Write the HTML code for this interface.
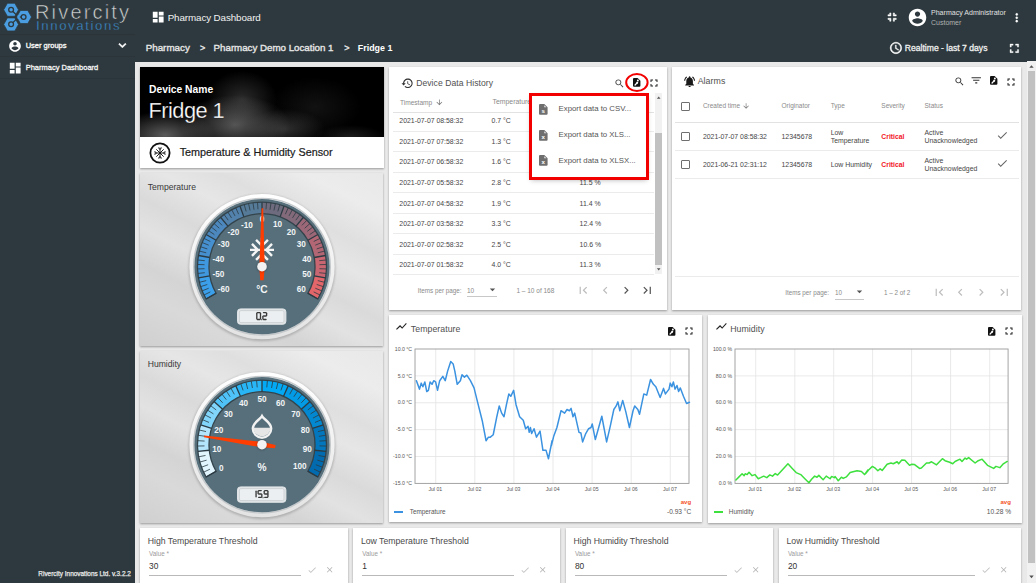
<!DOCTYPE html>
<html><head><meta charset="utf-8"><title>Pharmacy Dashboard</title>
<style>
*{box-sizing:border-box;margin:0;padding:0}
html,body{width:1036px;height:583px;overflow:hidden}
body{position:relative;background:#e9e9e9;font-family:"Liberation Sans",sans-serif}
.a{position:absolute;white-space:nowrap}
svg.a{overflow:visible}
.card{position:absolute;background:#fff;box-shadow:0 1px 2px rgba(0,0,0,.35)}
</style></head><body>
<div class="a" style="left:0px;top:0px;width:1036px;height:61.7px;background:#2d393e"></div>
<div class="a" style="left:0px;top:61px;width:135px;height:522px;background:#2d393e"></div>
<div class="a" style="left:0px;top:34px;width:135px;height:1px;background:#2a3439"></div>
<div class="a" style="left:0px;top:56px;width:135px;height:1px;background:#2a3439"></div>
<div class="a" style="left:0px;top:78px;width:135px;height:1px;background:#2a3439"></div>
<svg class="a" style="left:0;top:0" width="135" height="34" viewBox="0 0 135 34">
<g fill="#4a9de0" stroke="#2d393e" stroke-width="0.7" stroke-linejoin="round">
<polygon points="3.7,9.8 7.4,3.3 14.8,3.3 18.5,9.8 14.8,16.3 7.4,16.3"/>
<polygon points="16.7,17 20.4,10.5 27.8,10.5 31.5,17 27.8,23.5 20.4,23.5"/>
<polygon points="3.7,24.4 7.4,17.9 14.8,17.9 18.5,24.4 14.8,30.9 7.4,30.9"/>
</g>
<g fill="none" stroke="#2d393e" stroke-width="1.3" stroke-linecap="butt">
<circle cx="11.1" cy="9.8" r="2.4"/><circle cx="23.6" cy="17" r="2.4"/><circle cx="11.1" cy="24.3" r="2.4"/>
<path d="M12.9 11.5 L17.2 15.6 M21.2 17 H19.4 M12.9 22.6 L17.2 18.4"/>
</g>
<polygon points="17.6,15.0 20.6,17 17.6,19.0" fill="#4a9de0"/>
<text x="35" y="18.75" font-family="Liberation Sans" font-size="20" fill="#d4d4d4" stroke="#2d393e" stroke-width="0.55" letter-spacing="1.9" textLength="96">Rivercity</text>
<text x="36" y="30.4" font-family="Liberation Sans" font-size="13.2" fill="#3d8ed0" stroke="#2d393e" stroke-width="0.3" letter-spacing="1.5" textLength="85">Innovations</text>
</svg>
<svg class="a" style="left:7.9px;top:38.6px;" width="14" height="14" viewBox="0 0 24 24"><path fill="#fff" d="M12 2C6.48 2 2 6.48 2 12s4.48 10 10 10 10-4.48 10-10S17.52 2 12 2zm0 3c1.66 0 3 1.34 3 3s-1.34 3-3 3-3-1.34-3-3 1.34-3 3-3zm0 14.2c-2.5 0-4.71-1.28-6-3.22.03-1.99 4-3.08 6-3.08 1.99 0 5.970 1.09 6 3.08-1.29 1.94-3.5 3.22-6 3.22z"/></svg>
<div class="a" style="left:25.70px;top:42.25px;font-size:7.5px;line-height:7.5px;color:#f4f4f4;-webkit-text-stroke:0.35px #f4f4f4;">User groups</div>
<svg class="a" style="left:114.9px;top:38px;" width="14.8" height="14.8" viewBox="0 0 24 24"><path fill="#fff" stroke="#fff" stroke-width="0.9" d="M16.59 8.59L12 13.17 7.41 8.59 6 10l6 6 6-6z"/></svg>
<svg class="a" style="left:8px;top:61.1px;" width="14.4" height="14.4" viewBox="0 0 24 24"><path fill="#fff" d="M3 13h8V3H3v10zm0 8h8v-6H3v6zm10 0h8V11h-8v10zm0-18v6h8V3h-8z"/></svg>
<div class="a" style="left:25.70px;top:63.95px;font-size:7.5px;line-height:7.5px;color:#f4f4f4;-webkit-text-stroke:0.3px #f4f4f4;">Pharmacy Dashboard</div>
<div class="a" style="left:38.30px;top:570.64px;font-size:6.45px;line-height:6.45px;color:#e8e8e8;-webkit-text-stroke:0.25px #e8e8e8;">Rivercity Innovations Ltd. v.3.2.2</div>
<svg class="a" style="left:151.4px;top:10.1px;" width="14.4" height="14.4" viewBox="0 0 24 24"><path fill="#fff" d="M3 13h8V3H3v10zm0 8h8v-6H3v6zm10 0h8V11h-8v10zm0-18v6h8V3h-8z"/></svg>
<div class="a" style="left:167.70px;top:13.10px;font-size:9.8px;line-height:9.8px;color:#f2f2f2;letter-spacing:-0.1px;">Pharmacy Dashboard</div>
<div class="a" style="left:145.70px;top:43.10px;font-size:9.8px;line-height:9.8px;color:#e6e6e6;-webkit-text-stroke:0.35px #e6e6e6;">Pharmacy</div>
<div class="a" style="left:200.00px;top:43.78px;font-size:9px;line-height:9px;color:#e6e6e6;-webkit-text-stroke:0.35px #e6e6e6;">&gt;</div>
<div class="a" style="left:213.60px;top:43.15px;font-size:9.75px;line-height:9.75px;color:#e6e6e6;letter-spacing:-0.02px;-webkit-text-stroke:0.35px #e6e6e6;">Pharmacy Demo Location 1</div>
<div class="a" style="left:344.30px;top:43.78px;font-size:9px;line-height:9px;color:#e6e6e6;-webkit-text-stroke:0.35px #e6e6e6;">&gt;</div>
<div class="a" style="left:357.80px;top:43.87px;font-size:8.9px;line-height:8.9px;color:#fff;font-weight:700;">Fridge 1</div>
<svg class="a" style="left:885.2px;top:10.2px;" width="14.2" height="14.2" viewBox="0 0 24 24"><path fill="#fff" stroke="#fff" stroke-width="0.9" d="M5 16h3v3h2v-5H5v2zm3-8H5v2h5V5H8v3zm6 11h2v-3h3v-2h-5v5zm2-11V5h-2v5h5V8h-3z"/></svg>
<svg class="a" style="left:906.55px;top:6.95px;" width="21" height="21" viewBox="0 0 24 24"><path fill="#fff" d="M12 2C6.48 2 2 6.48 2 12s4.48 10 10 10 10-4.48 10-10S17.52 2 12 2zm0 3c1.66 0 3 1.34 3 3s-1.34 3-3 3-3-1.34-3-3 1.34-3 3-3zm0 14.2c-2.5 0-4.71-1.28-6-3.22.03-1.99 4-3.08 6-3.08 1.99 0 5.970 1.09 6 3.08-1.29 1.94-3.5 3.22-6 3.22z"/></svg>
<div class="a" style="left:931.00px;top:9.03px;font-size:7.05px;line-height:7.05px;color:#e0e0e0;">Pharmacy Administrator</div>
<div class="a" style="left:931.00px;top:18.87px;font-size:7px;line-height:7px;color:#b0b0b0;">Customer</div>
<svg class="a" style="left:1010.0px;top:10.55px;" width="13.5" height="13.5" viewBox="0 0 24 24"><path fill="#fff" stroke="#fff" stroke-width="0.5" d="M12 8c1.1 0 2-.9 2-2s-.9-2-2-2-2 .9-2 2 .9 2 2 2zm0 2c-1.1 0-2 .9-2 2s.9 2 2 2 2-.9 2-2-.9-2-2-2zm0 6c-1.1 0-2 .9-2 2s.9 2 2 2 2-.9 2-2-.9-2-2-2z"/></svg>
<svg class="a" style="left:888.84px;top:41.44px;" width="13.9" height="13.9" viewBox="0 0 24 24"><path fill="#fff" stroke="#fff" stroke-width="0.7" d="M11.99 2C6.47 2 2 6.48 2 12s4.47 10 9.99 10C17.52 22 22 17.52 22 12S17.52 2 11.99 2zM12 20c-4.420 0-8-3.58-8-8s3.58-8 8-8 8 3.58 8 8-3.58 8-8 8zm.5-13H11v6l5.25 3.15.75-1.23-4.5-2.67z"/></svg>
<div class="a" style="left:904.80px;top:44.22px;font-size:8.6px;line-height:8.6px;color:#f0f0f0;-webkit-text-stroke:0.3px #f0f0f0;">Realtime - last 7 days</div>
<svg class="a" style="left:1007.2px;top:40.94px;" width="14.7" height="14.7" viewBox="0 0 24 24"><path fill="#fff" stroke="#fff" stroke-width="0.6" d="M7 14H5v5h5v-2H7v-3zm-2-4h2V7h3V5H5v5zm12 7h-3v2h5v-5h-2v3zM14 5v2h3v3h2V5h-5z"/></svg>
<div class="card" style="left:140px;top:67px;width:243.5px;height:101px;">
<div class="a" style="left:0;top:0;width:243.5px;height:70px;background:
  radial-gradient(ellipse 50px 24px at 25px 68px, rgba(150,150,150,.6), rgba(150,150,150,0) 100%),
  radial-gradient(ellipse 55px 30px at 95px 58px, rgba(140,140,140,.6), rgba(140,140,140,0) 100%),
  radial-gradient(ellipse 35px 28px at 102px 32px, rgba(120,120,120,.35), rgba(110,110,110,0) 100%),
  radial-gradient(ellipse 40px 20px at 145px 62px, rgba(120,120,120,.38), rgba(110,110,110,0) 100%),
  radial-gradient(ellipse 45px 30px at 175px 40px, rgba(70,70,70,.25), rgba(60,60,60,0) 100%),
  radial-gradient(ellipse 35px 12px at 210px 70px, rgba(110,110,110,.25), rgba(100,100,100,0) 100%),
  #000;"></div>
</div>
<div class="a" style="left:149.00px;top:85.08px;font-size:10.3px;line-height:10.3px;color:#fff;font-weight:700;">Device Name</div>
<svg class="a" style="left:140px;top:95px" width="120" height="30" viewBox="140 95 120 30"><text x="148.6" y="117.7" font-family="Liberation Sans" font-size="21.8" letter-spacing="-0.55" fill="#ffffff" stroke="rgba(0,0,0,.5)" stroke-width="0.45">Fridge 1</text></svg>
<svg class="a" style="left:148.8px;top:141.7px" width="22" height="22" viewBox="0 0 22 22"><circle cx="11" cy="11" r="9.6" fill="none" stroke="#111" stroke-width="1.8"/><g stroke="#111" stroke-width="0.95" fill="none" stroke-linecap="round"><path d="M11 5.8V16.2M5.8 11H16.2M7.6 7.6L14.4 14.4M14.4 7.6L7.6 14.4"/><path d="M9.4 5.9L11 7.4L12.6 5.9M9.4 16.1L11 14.6L12.6 16.1M5.9 9.4L7.4 11L5.9 12.6M16.1 9.4L14.6 11L16.1 12.6"/></g></svg>
<div class="a" style="left:179.70px;top:147.46px;font-size:10.8px;line-height:10.8px;color:#1a1a1a;-webkit-text-stroke:0.2px #1a1a1a;">Temperature &amp; Humidity Sensor</div>
<div class="card" style="left:140px;top:173px;width:243px;height:173px;background:linear-gradient(27deg,#d0d0d0 0%,#d9d9d9 18%,#d4d4d4 28%,#e2e2e2 40%,#dadada 50%,#e6e6e6 62%,#dfdfdf 72%,#ececec 86%,#e8e8e8 100%);"></div>
<div class="a" style="left:147.70px;top:182.92px;font-size:8.6px;line-height:8.6px;color:#383838;">Temperature</div>
<svg class="a" style="left:140px;top:173px" width="243" height="173" viewBox="140 173 243 173"><defs>
<radialGradient id="bezt" cx="262.0" cy="266.7" r="73" gradientUnits="userSpaceOnUse">
<stop offset="0.88" stop-color="#b9bdbf"/><stop offset="0.93" stop-color="#e9e9e9"/><stop offset="0.97" stop-color="#fbfbfb"/><stop offset="1" stop-color="#d0d0d0"/></radialGradient>
<linearGradient id="bezlt" x1="0" y1="0" x2="0" y2="1"><stop offset="0" stop-color="#fff"/><stop offset="1" stop-color="#e3e3e3"/></linearGradient>
<filter id="sht" x="-20%" y="-20%" width="140%" height="140%"><feGaussianBlur stdDeviation="1.2"/></filter>
</defs><circle cx="262.0" cy="267.7" r="73.5" fill="rgba(0,0,0,.18)" filter="url(#sht)"/><circle cx="262.0" cy="266.7" r="72.6" fill="url(#bezlt)"/><circle cx="262.0" cy="266.7" r="68.3" fill="none" stroke="#c4c8ca" stroke-width="1.4"/><circle cx="262.0" cy="266.7" r="67.6" fill="#566f7b"/><path fill="#3c9fea" d="M206.14 298.95 A64.5 64.5 0 0 1 198.48 277.90 L209.81 275.90 A53 53 0 0 0 216.10 293.20Z"/><path fill="#4098de" d="M198.48 277.90 A64.5 64.5 0 0 1 198.48 255.50 L209.81 257.50 A53 53 0 0 0 209.81 275.90Z"/><path fill="#4690cf" d="M198.48 255.50 A64.5 64.5 0 0 1 206.14 234.45 L216.10 240.20 A53 53 0 0 0 209.81 257.50Z"/><path fill="#4c88bd" d="M206.14 234.45 A64.5 64.5 0 0 1 220.54 217.29 L227.93 226.10 A53 53 0 0 0 216.10 240.20Z"/><path fill="#5281ab" d="M220.54 217.29 A64.5 64.5 0 0 1 239.94 206.09 L243.87 216.90 A53 53 0 0 0 227.93 226.10Z"/><path fill="#567b98" d="M239.94 206.09 A64.5 64.5 0 0 1 262.00 202.20 L262.00 213.70 A53 53 0 0 0 243.87 216.90Z"/><path fill="#6d6b7d" d="M262.00 202.20 A64.5 64.5 0 0 1 284.06 206.09 L280.13 216.90 A53 53 0 0 0 262.00 213.70Z"/><path fill="#836a7b" d="M284.06 206.09 A64.5 64.5 0 0 1 303.46 217.29 L296.07 226.10 A53 53 0 0 0 280.13 216.90Z"/><path fill="#9c6878" d="M303.46 217.29 A64.5 64.5 0 0 1 317.86 234.45 L307.90 240.20 A53 53 0 0 0 296.07 226.10Z"/><path fill="#b36775" d="M317.86 234.45 A64.5 64.5 0 0 1 325.52 255.50 L314.19 257.50 A53 53 0 0 0 307.90 240.20Z"/><path fill="#ca6671" d="M325.52 255.50 A64.5 64.5 0 0 1 325.52 277.90 L314.19 275.90 A53 53 0 0 0 314.19 257.50Z"/><path fill="#e2666a" d="M325.52 277.90 A64.5 64.5 0 0 1 317.86 298.95 L307.90 293.20 A53 53 0 0 0 314.19 275.90Z"/><path fill="none" stroke="#34444c" stroke-width="1.3" d="M206.14 298.95 A64.5 64.5 0 1 1 317.86 298.95 L307.90 293.20 A53 53 0 1 0 216.10 293.20Z"/><line x1="216.10" y1="293.20" x2="206.14" y2="298.95" stroke="#2c3b43" stroke-width="1.3"/><line x1="210.32" y1="291.91" x2="204.03" y2="294.97" stroke="#2c3b43" stroke-width="0.8"/><line x1="208.69" y1="288.24" x2="202.20" y2="290.86" stroke="#2c3b43" stroke-width="0.8"/><line x1="207.31" y1="284.47" x2="200.66" y2="286.63" stroke="#2c3b43" stroke-width="0.8"/><line x1="206.21" y1="280.61" x2="199.42" y2="282.30" stroke="#2c3b43" stroke-width="0.8"/><line x1="209.81" y1="275.90" x2="198.48" y2="277.90" stroke="#2c3b43" stroke-width="1.3"/><line x1="204.81" y1="272.71" x2="197.85" y2="273.44" stroke="#2c3b43" stroke-width="0.8"/><line x1="204.54" y1="268.71" x2="197.54" y2="268.95" stroke="#2c3b43" stroke-width="0.8"/><line x1="204.54" y1="264.69" x2="197.54" y2="264.45" stroke="#2c3b43" stroke-width="0.8"/><line x1="204.81" y1="260.69" x2="197.85" y2="259.96" stroke="#2c3b43" stroke-width="0.8"/><line x1="209.81" y1="257.50" x2="198.48" y2="255.50" stroke="#2c3b43" stroke-width="1.3"/><line x1="206.21" y1="252.79" x2="199.42" y2="251.10" stroke="#2c3b43" stroke-width="0.8"/><line x1="207.31" y1="248.93" x2="200.66" y2="246.77" stroke="#2c3b43" stroke-width="0.8"/><line x1="208.69" y1="245.16" x2="202.20" y2="242.54" stroke="#2c3b43" stroke-width="0.8"/><line x1="210.32" y1="241.49" x2="204.03" y2="238.43" stroke="#2c3b43" stroke-width="0.8"/><line x1="216.10" y1="240.20" x2="206.14" y2="234.45" stroke="#2c3b43" stroke-width="1.3"/><line x1="214.33" y1="234.55" x2="208.53" y2="230.63" stroke="#2c3b43" stroke-width="0.8"/><line x1="216.69" y1="231.30" x2="211.17" y2="226.99" stroke="#2c3b43" stroke-width="0.8"/><line x1="219.27" y1="228.22" x2="214.07" y2="223.54" stroke="#2c3b43" stroke-width="0.8"/><line x1="222.06" y1="225.34" x2="217.19" y2="220.30" stroke="#2c3b43" stroke-width="0.8"/><line x1="227.93" y1="226.10" x2="220.54" y2="217.29" stroke="#2c3b43" stroke-width="1.3"/><line x1="228.20" y1="220.18" x2="224.09" y2="214.52" stroke="#2c3b43" stroke-width="0.8"/><line x1="231.53" y1="217.94" x2="227.82" y2="212.00" stroke="#2c3b43" stroke-width="0.8"/><line x1="235.01" y1="215.93" x2="231.72" y2="209.75" stroke="#2c3b43" stroke-width="0.8"/><line x1="238.61" y1="214.17" x2="235.77" y2="207.78" stroke="#2c3b43" stroke-width="0.8"/><line x1="243.87" y1="216.90" x2="239.94" y2="206.09" stroke="#2c3b43" stroke-width="1.3"/><line x1="246.15" y1="211.43" x2="244.22" y2="204.70" stroke="#2c3b43" stroke-width="0.8"/><line x1="250.05" y1="210.46" x2="248.59" y2="203.61" stroke="#2c3b43" stroke-width="0.8"/><line x1="254.00" y1="209.76" x2="253.02" y2="202.83" stroke="#2c3b43" stroke-width="0.8"/><line x1="257.99" y1="209.34" x2="257.50" y2="202.36" stroke="#2c3b43" stroke-width="0.8"/><line x1="262.00" y1="213.70" x2="262.00" y2="202.20" stroke="#2c3b43" stroke-width="1.3"/><line x1="266.01" y1="209.34" x2="266.50" y2="202.36" stroke="#2c3b43" stroke-width="0.8"/><line x1="270.00" y1="209.76" x2="270.98" y2="202.83" stroke="#2c3b43" stroke-width="0.8"/><line x1="273.95" y1="210.46" x2="275.41" y2="203.61" stroke="#2c3b43" stroke-width="0.8"/><line x1="277.85" y1="211.43" x2="279.78" y2="204.70" stroke="#2c3b43" stroke-width="0.8"/><line x1="280.13" y1="216.90" x2="284.06" y2="206.09" stroke="#2c3b43" stroke-width="1.3"/><line x1="285.39" y1="214.17" x2="288.23" y2="207.78" stroke="#2c3b43" stroke-width="0.8"/><line x1="288.99" y1="215.93" x2="292.28" y2="209.75" stroke="#2c3b43" stroke-width="0.8"/><line x1="292.47" y1="217.94" x2="296.18" y2="212.00" stroke="#2c3b43" stroke-width="0.8"/><line x1="295.80" y1="220.18" x2="299.91" y2="214.52" stroke="#2c3b43" stroke-width="0.8"/><line x1="296.07" y1="226.10" x2="303.46" y2="217.29" stroke="#2c3b43" stroke-width="1.3"/><line x1="301.94" y1="225.34" x2="306.81" y2="220.30" stroke="#2c3b43" stroke-width="0.8"/><line x1="304.73" y1="228.22" x2="309.93" y2="223.54" stroke="#2c3b43" stroke-width="0.8"/><line x1="307.31" y1="231.30" x2="312.83" y2="226.99" stroke="#2c3b43" stroke-width="0.8"/><line x1="309.67" y1="234.55" x2="315.47" y2="230.63" stroke="#2c3b43" stroke-width="0.8"/><line x1="307.90" y1="240.20" x2="317.86" y2="234.45" stroke="#2c3b43" stroke-width="1.3"/><line x1="313.68" y1="241.49" x2="319.97" y2="238.43" stroke="#2c3b43" stroke-width="0.8"/><line x1="315.31" y1="245.16" x2="321.80" y2="242.54" stroke="#2c3b43" stroke-width="0.8"/><line x1="316.69" y1="248.93" x2="323.34" y2="246.77" stroke="#2c3b43" stroke-width="0.8"/><line x1="317.79" y1="252.79" x2="324.58" y2="251.10" stroke="#2c3b43" stroke-width="0.8"/><line x1="314.19" y1="257.50" x2="325.52" y2="255.50" stroke="#2c3b43" stroke-width="1.3"/><line x1="319.19" y1="260.69" x2="326.15" y2="259.96" stroke="#2c3b43" stroke-width="0.8"/><line x1="319.46" y1="264.69" x2="326.46" y2="264.45" stroke="#2c3b43" stroke-width="0.8"/><line x1="319.46" y1="268.71" x2="326.46" y2="268.95" stroke="#2c3b43" stroke-width="0.8"/><line x1="319.19" y1="272.71" x2="326.15" y2="273.44" stroke="#2c3b43" stroke-width="0.8"/><line x1="314.19" y1="275.90" x2="325.52" y2="277.90" stroke="#2c3b43" stroke-width="1.3"/><line x1="317.79" y1="280.61" x2="324.58" y2="282.30" stroke="#2c3b43" stroke-width="0.8"/><line x1="316.69" y1="284.47" x2="323.34" y2="286.63" stroke="#2c3b43" stroke-width="0.8"/><line x1="315.31" y1="288.24" x2="321.80" y2="290.86" stroke="#2c3b43" stroke-width="0.8"/><line x1="313.68" y1="291.91" x2="319.97" y2="294.97" stroke="#2c3b43" stroke-width="0.8"/><line x1="307.90" y1="293.20" x2="317.86" y2="298.95" stroke="#2c3b43" stroke-width="1.3"/><text x="223.61" y="291.55" text-anchor="middle" font-family="Liberation Sans" font-size="8.2" font-weight="700" fill="#f2f4f5">-60</text><text x="218.34" y="277.08" text-anchor="middle" font-family="Liberation Sans" font-size="8.2" font-weight="700" fill="#f2f4f5">-50</text><text x="218.34" y="261.69" text-anchor="middle" font-family="Liberation Sans" font-size="8.2" font-weight="700" fill="#f2f4f5">-40</text><text x="223.61" y="247.22" text-anchor="middle" font-family="Liberation Sans" font-size="8.2" font-weight="700" fill="#f2f4f5">-30</text><text x="233.50" y="235.42" text-anchor="middle" font-family="Liberation Sans" font-size="8.2" font-weight="700" fill="#f2f4f5">-20</text><text x="246.84" y="227.72" text-anchor="middle" font-family="Liberation Sans" font-size="8.2" font-weight="700" fill="#f2f4f5">-10</text><text x="262.00" y="222.46" text-anchor="middle" font-family="Liberation Sans" font-size="8.2" font-weight="700" fill="#f2f4f5">0</text><text x="277.54" y="226.69" text-anchor="middle" font-family="Liberation Sans" font-size="8.2" font-weight="700" fill="#f2f4f5">10</text><text x="291.20" y="234.58" text-anchor="middle" font-family="Liberation Sans" font-size="8.2" font-weight="700" fill="#f2f4f5">20</text><text x="301.35" y="246.67" text-anchor="middle" font-family="Liberation Sans" font-size="8.2" font-weight="700" fill="#f2f4f5">30</text><text x="306.74" y="261.50" text-anchor="middle" font-family="Liberation Sans" font-size="8.2" font-weight="700" fill="#f2f4f5">40</text><text x="306.74" y="277.27" text-anchor="middle" font-family="Liberation Sans" font-size="8.2" font-weight="700" fill="#f2f4f5">50</text><text x="301.35" y="292.10" text-anchor="middle" font-family="Liberation Sans" font-size="8.2" font-weight="700" fill="#f2f4f5">60</text><g transform="translate(247.6 235.5) scale(1.2)"><path fill="#f5f5f5" d="M22 11h-4.17l3.24-3.24-1.41-1.42L15 11h-2V9l4.66-4.66-1.42-1.41L13 6.17V2h-2v4.17L7.76 2.93 6.34 4.34 11 9v2H9L4.34 6.34 2.93 7.76 6.17 11H2v2h4.17l-3.24 3.24 1.41 1.42L9 13h2v2l-4.66 4.660 1.42 1.41L11 17.83V22h2v-4.17l3.24 3.24 1.42-1.41L13 15v-2h2l4.66 4.66 1.41-1.42L17.83 13H22z"/></g><text x="262.0" y="293.0" text-anchor="middle" font-family="Liberation Sans" font-size="10.2" font-weight="700" fill="#f4f6f7">°C</text><rect x="237.5" y="308.9" width="48.4" height="15.4" rx="3" fill="#e4e7e9" stroke="#dfe3e5" stroke-width="1"/><rect x="239.4" y="310.59999999999997" width="44.6" height="12.0" rx="1.5" fill="#eceff1" stroke="#c3c8cb" stroke-width="0.7"/><path d="M257.40 312.55 L259.90 312.55" stroke="#3a3a3a" stroke-width="1.35" stroke-linecap="round"/><path d="M260.50 313.15 L260.50 315.60" stroke="#3a3a3a" stroke-width="1.35" stroke-linecap="round"/><path d="M260.50 316.40 L260.50 318.85" stroke="#3a3a3a" stroke-width="1.35" stroke-linecap="round"/><path d="M257.40 319.45 L259.90 319.45" stroke="#3a3a3a" stroke-width="1.35" stroke-linecap="round"/><path d="M256.80 316.40 L256.80 318.85" stroke="#3a3a3a" stroke-width="1.35" stroke-linecap="round"/><path d="M256.80 313.15 L256.80 315.60" stroke="#3a3a3a" stroke-width="1.35" stroke-linecap="round"/><rect x="261.25" y="319.05" width="0.9" height="1.2" fill="#3a3a3a"/><path d="M263.50 312.55 L266.00 312.55" stroke="#3a3a3a" stroke-width="1.35" stroke-linecap="round"/><path d="M266.60 313.15 L266.60 315.60" stroke="#3a3a3a" stroke-width="1.35" stroke-linecap="round"/><path d="M263.50 319.45 L266.00 319.45" stroke="#3a3a3a" stroke-width="1.35" stroke-linecap="round"/><path d="M262.90 316.40 L262.90 318.85" stroke="#3a3a3a" stroke-width="1.35" stroke-linecap="round"/><path d="M263.50 316.00 L266.00 316.00" stroke="#3a3a3a" stroke-width="1.35" stroke-linecap="round"/><g transform="rotate(0.40 262.0 266.7)"><polygon points="261.2,208.2 262.8,208.2 264.7,266.7 263.7,280.2 260.3,280.2 259.3,266.7" fill="#ff3d00"/></g><circle cx="262.0" cy="266.7" r="5.2" fill="rgba(0,0,0,.25)" filter="url(#sht)"/><circle cx="262.0" cy="266.7" r="4.8" fill="#f2f2f2"/></svg>
<div class="card" style="left:140px;top:350.6px;width:243px;height:172.6px;background:linear-gradient(27deg,#d0d0d0 0%,#d9d9d9 18%,#d4d4d4 28%,#e2e2e2 40%,#dadada 50%,#e6e6e6 62%,#dfdfdf 72%,#ececec 86%,#e8e8e8 100%);"></div>
<div class="a" style="left:147.70px;top:360.32px;font-size:8.6px;line-height:8.6px;color:#383838;">Humidity</div>
<svg class="a" style="left:140px;top:350.6px" width="243" height="173" viewBox="140 350.6 243 173"><defs>
<radialGradient id="bezh" cx="262.0" cy="444.3" r="73" gradientUnits="userSpaceOnUse">
<stop offset="0.88" stop-color="#b9bdbf"/><stop offset="0.93" stop-color="#e9e9e9"/><stop offset="0.97" stop-color="#fbfbfb"/><stop offset="1" stop-color="#d0d0d0"/></radialGradient>
<linearGradient id="bezlh" x1="0" y1="0" x2="0" y2="1"><stop offset="0" stop-color="#fff"/><stop offset="1" stop-color="#e3e3e3"/></linearGradient>
<filter id="shh" x="-20%" y="-20%" width="140%" height="140%"><feGaussianBlur stdDeviation="1.2"/></filter>
</defs><circle cx="262.0" cy="445.3" r="73.5" fill="rgba(0,0,0,.18)" filter="url(#shh)"/><circle cx="262.0" cy="444.3" r="72.6" fill="url(#bezlh)"/><circle cx="262.0" cy="444.3" r="68.3" fill="none" stroke="#c4c8ca" stroke-width="1.4"/><circle cx="262.0" cy="444.3" r="67.6" fill="#566f7b"/><path fill="#e1f5fe" d="M206.14 476.55 A64.5 64.5 0 0 1 197.85 451.04 L209.29 449.84 A53 53 0 0 0 216.10 470.80Z"/><path fill="#b3e5fc" d="M197.85 451.04 A64.5 64.5 0 0 1 200.66 424.37 L211.59 427.92 A53 53 0 0 0 209.29 449.84Z"/><path fill="#81d4fa" d="M200.66 424.37 A64.5 64.5 0 0 1 214.07 401.14 L222.61 408.84 A53 53 0 0 0 211.59 427.92Z"/><path fill="#4fc3f7" d="M214.07 401.14 A64.5 64.5 0 0 1 235.77 385.38 L240.44 395.88 A53 53 0 0 0 222.61 408.84Z"/><path fill="#29b6f6" d="M235.77 385.38 A64.5 64.5 0 0 1 262.00 379.80 L262.00 391.30 A53 53 0 0 0 240.44 395.88Z"/><path fill="#03a9f4" d="M262.00 379.80 A64.5 64.5 0 0 1 288.23 385.38 L283.56 395.88 A53 53 0 0 0 262.00 391.30Z"/><path fill="#039be5" d="M288.23 385.38 A64.5 64.5 0 0 1 309.93 401.14 L301.39 408.84 A53 53 0 0 0 283.56 395.88Z"/><path fill="#0288d1" d="M309.93 401.14 A64.5 64.5 0 0 1 323.34 424.37 L312.41 427.92 A53 53 0 0 0 301.39 408.84Z"/><path fill="#0277bd" d="M323.34 424.37 A64.5 64.5 0 0 1 326.15 451.04 L314.71 449.84 A53 53 0 0 0 312.41 427.92Z"/><path fill="#026aae" d="M326.15 451.04 A64.5 64.5 0 0 1 317.86 476.55 L307.90 470.80 A53 53 0 0 0 314.71 449.84Z"/><path fill="none" stroke="#34444c" stroke-width="1.3" d="M206.14 476.55 A64.5 64.5 0 1 1 317.86 476.55 L307.90 470.80 A53 53 0 1 0 216.10 470.80Z"/><line x1="216.10" y1="470.80" x2="206.14" y2="476.55" stroke="#2c3b43" stroke-width="1.3"/><line x1="209.97" y1="468.78" x2="203.64" y2="471.76" stroke="#2c3b43" stroke-width="0.8"/><line x1="208.11" y1="464.34" x2="201.55" y2="466.78" stroke="#2c3b43" stroke-width="0.8"/><line x1="206.62" y1="459.76" x2="199.88" y2="461.65" stroke="#2c3b43" stroke-width="0.8"/><line x1="205.52" y1="455.07" x2="198.64" y2="456.39" stroke="#2c3b43" stroke-width="0.8"/><line x1="209.29" y1="449.84" x2="197.85" y2="451.04" stroke="#2c3b43" stroke-width="1.3"/><line x1="204.51" y1="445.50" x2="197.51" y2="445.65" stroke="#2c3b43" stroke-width="0.8"/><line x1="204.61" y1="440.69" x2="197.63" y2="440.25" stroke="#2c3b43" stroke-width="0.8"/><line x1="205.12" y1="435.90" x2="198.19" y2="434.88" stroke="#2c3b43" stroke-width="0.8"/><line x1="206.02" y1="431.17" x2="199.20" y2="429.57" stroke="#2c3b43" stroke-width="0.8"/><line x1="211.59" y1="427.92" x2="200.66" y2="424.37" stroke="#2c3b43" stroke-width="1.3"/><line x1="208.99" y1="422.02" x2="202.54" y2="419.31" stroke="#2c3b43" stroke-width="0.8"/><line x1="211.04" y1="417.66" x2="204.84" y2="414.42" stroke="#2c3b43" stroke-width="0.8"/><line x1="213.45" y1="413.49" x2="207.54" y2="409.74" stroke="#2c3b43" stroke-width="0.8"/><line x1="216.20" y1="409.54" x2="210.62" y2="405.30" stroke="#2c3b43" stroke-width="0.8"/><line x1="222.61" y1="408.84" x2="214.07" y2="401.14" stroke="#2c3b43" stroke-width="1.3"/><line x1="222.64" y1="402.38" x2="217.85" y2="397.28" stroke="#2c3b43" stroke-width="0.8"/><line x1="226.28" y1="399.24" x2="221.94" y2="393.75" stroke="#2c3b43" stroke-width="0.8"/><line x1="230.18" y1="396.41" x2="226.31" y2="390.58" stroke="#2c3b43" stroke-width="0.8"/><line x1="234.30" y1="393.91" x2="230.93" y2="387.78" stroke="#2c3b43" stroke-width="0.8"/><line x1="240.44" y1="395.88" x2="235.77" y2="385.38" stroke="#2c3b43" stroke-width="1.3"/><line x1="243.09" y1="390.00" x2="240.79" y2="383.39" stroke="#2c3b43" stroke-width="0.8"/><line x1="247.70" y1="388.61" x2="245.96" y2="381.83" stroke="#2c3b43" stroke-width="0.8"/><line x1="252.41" y1="387.61" x2="251.24" y2="380.70" stroke="#2c3b43" stroke-width="0.8"/><line x1="257.19" y1="387.00" x2="256.60" y2="380.03" stroke="#2c3b43" stroke-width="0.8"/><line x1="262.00" y1="391.30" x2="262.00" y2="379.80" stroke="#2c3b43" stroke-width="1.3"/><line x1="266.81" y1="387.00" x2="267.40" y2="380.03" stroke="#2c3b43" stroke-width="0.8"/><line x1="271.59" y1="387.61" x2="272.76" y2="380.70" stroke="#2c3b43" stroke-width="0.8"/><line x1="276.30" y1="388.61" x2="278.04" y2="381.83" stroke="#2c3b43" stroke-width="0.8"/><line x1="280.91" y1="390.00" x2="283.21" y2="383.39" stroke="#2c3b43" stroke-width="0.8"/><line x1="283.56" y1="395.88" x2="288.23" y2="385.38" stroke="#2c3b43" stroke-width="1.3"/><line x1="289.70" y1="393.91" x2="293.07" y2="387.78" stroke="#2c3b43" stroke-width="0.8"/><line x1="293.82" y1="396.41" x2="297.69" y2="390.58" stroke="#2c3b43" stroke-width="0.8"/><line x1="297.72" y1="399.24" x2="302.06" y2="393.75" stroke="#2c3b43" stroke-width="0.8"/><line x1="301.36" y1="402.38" x2="306.15" y2="397.28" stroke="#2c3b43" stroke-width="0.8"/><line x1="301.39" y1="408.84" x2="309.93" y2="401.14" stroke="#2c3b43" stroke-width="1.3"/><line x1="307.80" y1="409.54" x2="313.38" y2="405.30" stroke="#2c3b43" stroke-width="0.8"/><line x1="310.55" y1="413.49" x2="316.46" y2="409.74" stroke="#2c3b43" stroke-width="0.8"/><line x1="312.96" y1="417.66" x2="319.16" y2="414.42" stroke="#2c3b43" stroke-width="0.8"/><line x1="315.01" y1="422.02" x2="321.46" y2="419.31" stroke="#2c3b43" stroke-width="0.8"/><line x1="312.41" y1="427.92" x2="323.34" y2="424.37" stroke="#2c3b43" stroke-width="1.3"/><line x1="317.98" y1="431.17" x2="324.80" y2="429.57" stroke="#2c3b43" stroke-width="0.8"/><line x1="318.88" y1="435.90" x2="325.81" y2="434.88" stroke="#2c3b43" stroke-width="0.8"/><line x1="319.39" y1="440.69" x2="326.37" y2="440.25" stroke="#2c3b43" stroke-width="0.8"/><line x1="319.49" y1="445.50" x2="326.49" y2="445.65" stroke="#2c3b43" stroke-width="0.8"/><line x1="314.71" y1="449.84" x2="326.15" y2="451.04" stroke="#2c3b43" stroke-width="1.3"/><line x1="318.48" y1="455.07" x2="325.36" y2="456.39" stroke="#2c3b43" stroke-width="0.8"/><line x1="317.38" y1="459.76" x2="324.12" y2="461.65" stroke="#2c3b43" stroke-width="0.8"/><line x1="315.89" y1="464.34" x2="322.45" y2="466.78" stroke="#2c3b43" stroke-width="0.8"/><line x1="314.03" y1="468.78" x2="320.36" y2="471.76" stroke="#2c3b43" stroke-width="0.8"/><line x1="307.90" y1="470.80" x2="317.86" y2="476.55" stroke="#2c3b43" stroke-width="1.3"/><text x="221.36" y="470.45" text-anchor="middle" font-family="Liberation Sans" font-size="8.2" font-weight="700" fill="#f2f4f5">0</text><text x="216.82" y="451.73" text-anchor="middle" font-family="Liberation Sans" font-size="8.2" font-weight="700" fill="#f2f4f5">10</text><text x="218.79" y="432.95" text-anchor="middle" font-family="Liberation Sans" font-size="8.2" font-weight="700" fill="#f2f4f5">20</text><text x="228.24" y="416.59" text-anchor="middle" font-family="Liberation Sans" font-size="8.2" font-weight="700" fill="#f2f4f5">30</text><text x="243.52" y="405.48" text-anchor="middle" font-family="Liberation Sans" font-size="8.2" font-weight="700" fill="#f2f4f5">40</text><text x="262.00" y="401.55" text-anchor="middle" font-family="Liberation Sans" font-size="8.2" font-weight="700" fill="#f2f4f5">50</text><text x="280.48" y="405.48" text-anchor="middle" font-family="Liberation Sans" font-size="8.2" font-weight="700" fill="#f2f4f5">60</text><text x="295.76" y="416.59" text-anchor="middle" font-family="Liberation Sans" font-size="8.2" font-weight="700" fill="#f2f4f5">70</text><text x="305.21" y="432.95" text-anchor="middle" font-family="Liberation Sans" font-size="8.2" font-weight="700" fill="#f2f4f5">80</text><text x="307.18" y="451.73" text-anchor="middle" font-family="Liberation Sans" font-size="8.2" font-weight="700" fill="#f2f4f5">90</text><text x="299.72" y="468.76" text-anchor="middle" font-family="Liberation Sans" font-size="8.2" font-weight="700" fill="#f2f4f5">100</text><path d="M262.0 415.7 C260.5 418.7 252.8 422.1 252.8 428.1 A9.2 9.2 0 0 0 271.2 428.1 C271.2 422.1 263.5 418.7 262.0 415.7Z" fill="none" stroke="#f2f2f2" stroke-width="2.4"/><path d="M253.4 427.3 H270.59999999999997 A8.6 8.6 0 0 1 253.4 427.3Z" fill="#e6e6e6"/><text x="262.0" y="470.6" text-anchor="middle" font-family="Liberation Sans" font-size="10.2" font-weight="700" fill="#f4f6f7">%</text><rect x="237.5" y="486.5" width="48.4" height="15.4" rx="3" fill="#e4e7e9" stroke="#dfe3e5" stroke-width="1"/><rect x="239.4" y="488.2" width="44.6" height="12.0" rx="1.5" fill="#eceff1" stroke="#c3c8cb" stroke-width="0.7"/><path d="M256.07 490.75 L256.07 493.20" stroke="#3a3a3a" stroke-width="1.35" stroke-linecap="round"/><path d="M256.07 494.00 L256.07 496.45" stroke="#3a3a3a" stroke-width="1.35" stroke-linecap="round"/><path d="M258.73 490.15 L261.22 490.15" stroke="#3a3a3a" stroke-width="1.35" stroke-linecap="round"/><path d="M261.82 494.00 L261.82 496.45" stroke="#3a3a3a" stroke-width="1.35" stroke-linecap="round"/><path d="M258.73 497.05 L261.22 497.05" stroke="#3a3a3a" stroke-width="1.35" stroke-linecap="round"/><path d="M258.12 490.75 L258.12 493.20" stroke="#3a3a3a" stroke-width="1.35" stroke-linecap="round"/><path d="M258.73 493.60 L261.22 493.60" stroke="#3a3a3a" stroke-width="1.35" stroke-linecap="round"/><rect x="262.57" y="496.65" width="0.9" height="1.2" fill="#3a3a3a"/><path d="M264.82 490.15 L267.32 490.15" stroke="#3a3a3a" stroke-width="1.35" stroke-linecap="round"/><path d="M267.92 490.75 L267.92 493.20" stroke="#3a3a3a" stroke-width="1.35" stroke-linecap="round"/><path d="M267.92 494.00 L267.92 496.45" stroke="#3a3a3a" stroke-width="1.35" stroke-linecap="round"/><path d="M264.82 497.05 L267.32 497.05" stroke="#3a3a3a" stroke-width="1.35" stroke-linecap="round"/><path d="M264.22 490.75 L264.22 493.20" stroke="#3a3a3a" stroke-width="1.35" stroke-linecap="round"/><path d="M264.82 493.60 L267.32 493.60" stroke="#3a3a3a" stroke-width="1.35" stroke-linecap="round"/><g transform="rotate(-81.84 262.0 444.3)"><polygon points="261.2,385.8 262.8,385.8 264.7,444.3 263.7,457.8 260.3,457.8 259.3,444.3" fill="#ff3d00"/></g><circle cx="262.0" cy="444.3" r="5.2" fill="rgba(0,0,0,.25)" filter="url(#shh)"/><circle cx="262.0" cy="444.3" r="4.8" fill="#f2f2f2"/></svg>
<div class="card" style="left:388.5px;top:66.5px;width:278.7px;height:243.5px;"></div>
<svg class="a" style="left:401.3px;top:76.7px;" width="12.7" height="12.7" viewBox="0 0 24 24"><path fill="#333" d="M13 3c-4.97 0-9 4.03-9 9H1l3.890 3.89.07.14L9 12H6c0-3.87 3.13-7 7-7s7 3.13 7 7-3.13 7-7 7c-1.93 0-3.68-.79-4.94-2.06l-1.42 1.420C8.27 19.99 10.510 21 13 21c4.97 0 9-4.03 9-9s-4.03-9-9-9zm-1 5v5l4.28 2.54.72-1.21-3.5-2.08V8H12z"/></svg>
<div class="a" style="left:416.20px;top:78.72px;font-size:8.6px;line-height:8.6px;color:#505050;letter-spacing:0.05px;">Device Data History</div>
<svg class="a" style="left:613.6px;top:77.6px;" width="11" height="11" viewBox="0 0 24 24"><path fill="#444" d="M15.5 14h-.79l-.28-.27C15.41 12.59 16 11.11 16 9.5 16 5.91 13.09 3 9.5 3S3 5.91 3 9.5 5.91 16 9.5 16c1.61 0 3.09-.59 4.23-1.57l.27.28v.79l5 4.99L20.49 19l-4.99-5zm-6 0C7.01 14 5 11.99 5 9.5S7.01 5 9.5 5 14 7.01 14 9.5 11.99 14 9.5 14z"/></svg>
<svg class="a" style="left:633.2px;top:78.2px" width="7.4" height="8.8" viewBox="0 0 7.4 8.8"><path fill="#111" d="M1 0 H4.588 L7.4 2.8120000000000003 V7.800000000000001 Q7.4 8.8 6.4 8.8 H1 Q0 8.8 0 7.800000000000001 V1 Q0 0 1 0Z"/><path fill="#fff" d="M3.988 0.6 V3.4120000000000004 H6.800000000000001Z" opacity="0"/><circle cx="4.884" cy="2.3760000000000003" r="0.9620000000000001" fill="#fff"/><path d="M2.0720000000000005 7.040000000000001 L4.292 4.5760000000000005" stroke="#fff" stroke-width="1.2580000000000002" stroke-linecap="round"/><path fill="#fff" d="M2.9600000000000004 3.9600000000000004 L5.328 3.5200000000000005 L4.884 6.16Z"/></svg>
<svg class="a" style="left:647.9px;top:76.7px;" width="12" height="12" viewBox="0 0 24 24"><path fill="#222" d="M7 14H5v5h5v-2H7v-3zm-2-4h2V7h3V5H5v5zm12 7h-3v2h5v-5h-2v3zM14 5v2h3v3h2V5h-5z"/></svg>
<div class="a" style="left:399.90px;top:99.51px;font-size:6.6px;line-height:6.6px;color:#8a8a8a;">Timestamp</div>
<svg class="a" style="left:434.6px;top:98px;" width="8.7" height="8.7" viewBox="0 0 24 24"><path fill="#777" d="M20 12l-1.41-1.41L13 16.17V4h-2v12.17l-5.58-5.59L4 12l8 8 8-8z"/></svg>
<div class="a" style="left:492.50px;top:99.26px;font-size:6.9px;line-height:6.9px;color:#8a8a8a;">Temperature</div>
<div class="a" style="left:580.00px;top:99.26px;font-size:6.9px;line-height:6.9px;color:#8a8a8a;">Humidity</div>
<div class="a" style="left:392.8px;top:112.2px;width:261px;height:0.8px;background:#e2e2e2"></div>
<div class="a" style="left:399.30px;top:118.36px;font-size:6.9px;line-height:6.9px;color:#454545;">2021-07-07 08:58:32</div>
<div class="a" style="left:491.60px;top:118.36px;font-size:6.9px;line-height:6.9px;color:#454545;">0.7 °C</div>
<div class="a" style="left:579.60px;top:118.36px;font-size:6.9px;line-height:6.9px;color:#454545;">11.7 %</div>
<div class="a" style="left:392.8px;top:130.6px;width:261px;height:0.9px;background:#ebebeb"></div>
<div class="a" style="left:399.30px;top:138.91px;font-size:6.9px;line-height:6.9px;color:#454545;">2021-07-07 07:58:32</div>
<div class="a" style="left:491.60px;top:138.91px;font-size:6.9px;line-height:6.9px;color:#454545;">1.3 °C</div>
<div class="a" style="left:579.60px;top:138.91px;font-size:6.9px;line-height:6.9px;color:#454545;">11.6 %</div>
<div class="a" style="left:392.8px;top:151.15px;width:261px;height:0.9px;background:#ebebeb"></div>
<div class="a" style="left:399.30px;top:159.46px;font-size:6.9px;line-height:6.9px;color:#454545;">2021-07-07 06:58:32</div>
<div class="a" style="left:491.60px;top:159.46px;font-size:6.9px;line-height:6.9px;color:#454545;">1.6 °C</div>
<div class="a" style="left:579.60px;top:159.46px;font-size:6.9px;line-height:6.9px;color:#454545;">11.5 %</div>
<div class="a" style="left:392.8px;top:171.7px;width:261px;height:0.9px;background:#ebebeb"></div>
<div class="a" style="left:399.30px;top:180.01px;font-size:6.9px;line-height:6.9px;color:#454545;">2021-07-07 05:58:32</div>
<div class="a" style="left:491.60px;top:180.01px;font-size:6.9px;line-height:6.9px;color:#454545;">2.8 °C</div>
<div class="a" style="left:579.60px;top:180.01px;font-size:6.9px;line-height:6.9px;color:#454545;">11.5 %</div>
<div class="a" style="left:392.8px;top:192.25px;width:261px;height:0.9px;background:#ebebeb"></div>
<div class="a" style="left:399.30px;top:200.56px;font-size:6.9px;line-height:6.9px;color:#454545;">2021-07-07 04:58:32</div>
<div class="a" style="left:491.60px;top:200.56px;font-size:6.9px;line-height:6.9px;color:#454545;">1.9 °C</div>
<div class="a" style="left:579.60px;top:200.56px;font-size:6.9px;line-height:6.9px;color:#454545;">11.4 %</div>
<div class="a" style="left:392.8px;top:212.8px;width:261px;height:0.9px;background:#ebebeb"></div>
<div class="a" style="left:399.30px;top:221.11px;font-size:6.9px;line-height:6.9px;color:#454545;">2021-07-07 03:58:32</div>
<div class="a" style="left:491.60px;top:221.11px;font-size:6.9px;line-height:6.9px;color:#454545;">3.3 °C</div>
<div class="a" style="left:579.60px;top:221.11px;font-size:6.9px;line-height:6.9px;color:#454545;">12.4 %</div>
<div class="a" style="left:392.8px;top:233.35px;width:261px;height:0.9px;background:#ebebeb"></div>
<div class="a" style="left:399.30px;top:241.66px;font-size:6.9px;line-height:6.9px;color:#454545;">2021-07-07 02:58:32</div>
<div class="a" style="left:491.60px;top:241.66px;font-size:6.9px;line-height:6.9px;color:#454545;">2.5 °C</div>
<div class="a" style="left:579.60px;top:241.66px;font-size:6.9px;line-height:6.9px;color:#454545;">10.6 %</div>
<div class="a" style="left:392.8px;top:253.9px;width:261px;height:0.9px;background:#ebebeb"></div>
<div class="a" style="left:399.30px;top:262.21px;font-size:6.9px;line-height:6.9px;color:#454545;">2021-07-07 01:58:32</div>
<div class="a" style="left:491.60px;top:262.21px;font-size:6.9px;line-height:6.9px;color:#454545;">4.0 °C</div>
<div class="a" style="left:579.60px;top:262.21px;font-size:6.9px;line-height:6.9px;color:#454545;">11.3 %</div>
<div class="a" style="left:392.8px;top:274.45px;width:261px;height:0.9px;background:#ebebeb"></div>
<div class="a" style="left:654.6px;top:93px;width:7.4px;height:181px;background:#f1f1f1"></div>
<div class="a" style="left:655px;top:132.6px;width:6.5px;height:132.7px;background:#c1c1c1"></div>
<svg class="a" style="left:654.6px;top:93px" width="7.4" height="181" viewBox="0 0 7.4 181"><path d="M1.9 5.6 L3.7 3.4 L5.5 5.6Z" fill="#555"/><path d="M1.9 175.4 L3.7 177.6 L5.5 175.4Z" fill="#555"/></svg>
<div class="a" style="left:417.80px;top:288.17px;font-size:6.3px;line-height:6.3px;color:#8a8a8a;">Items per page:</div>
<div class="a" style="left:467.00px;top:288.00px;font-size:6.5px;line-height:6.5px;color:#8a8a8a;">10</div>
<div class="a" style="left:467px;top:296.2px;width:30px;height:0.9px;background:#c8c8c8"></div>
<svg class="a" style="left:485.9px;top:283.0px;" width="13" height="13" viewBox="0 0 24 24"><path fill="#555" d="M7 10l5 5 5-5z"/></svg>
<div class="a" style="left:516.40px;top:288.00px;font-size:6.5px;line-height:6.5px;color:#8a8a8a;">1 – 10 of 168</div>
<svg class="a" style="left:575.6px;top:282.85px;" width="14.5" height="14.5" viewBox="0 0 24 24"><path fill="#bdbdbd" d="M18.41 16.59L13.82 12l4.59-4.59L17 6l-6 6 6 6zM6 6h2v12H6z"/></svg>
<svg class="a" style="left:597.5px;top:282.85px;" width="14.5" height="14.5" viewBox="0 0 24 24"><path fill="#bdbdbd" d="M15.41 7.41L14 6l-6 6 6 6 1.41-1.41L10.83 12z"/></svg>
<svg class="a" style="left:619.0px;top:282.85px;" width="14.5" height="14.5" viewBox="0 0 24 24"><path fill="#555" d="M10 6L8.59 7.41 13.17 12l-4.58 4.59L10 18l6-6z"/></svg>
<svg class="a" style="left:640.4px;top:282.85px;" width="14.5" height="14.5" viewBox="0 0 24 24"><path fill="#555" d="M5.59 7.41L10.18 12l-4.59 4.59L7 18l6-6-6-6zM16 6h2v12h-2z"/></svg>
<div class="a" style="left:531px;top:95px;width:116px;height:83px;background:#fff;box-shadow:0 2px 5px rgba(0,0,0,.3)"></div>
<svg class="a" style="left:538.8px;top:103.8px" width="8.6" height="10.8" viewBox="0 0 8.6 10.8"><path fill="#6e6e6e" d="M1 0 H5.332 L8.6 3.268 V9.8 Q8.6 10.8 7.6 10.8 H1 Q0 10.8 0 9.8 V1 Q0 0 1 0Z"/><path fill="#fff" d="M4.732 0.6 V3.868 H8.0Z" opacity="0"/><path d="M5.3 1.2 L7.4 3.3 L5.3 3.3Z" fill="#fff" opacity="0.9"/><text x="4.3" y="9.2" text-anchor="middle" font-family="Liberation Sans" font-size="6.2" font-weight="700" fill="#fff">s</text></svg>
<div class="a" style="left:558.60px;top:104.90px;font-size:7.8px;line-height:7.8px;color:#555;">Export data to CSV...</div>
<svg class="a" style="left:538.8px;top:129.6px" width="8.6" height="10.8" viewBox="0 0 8.6 10.8"><path fill="#6e6e6e" d="M1 0 H5.332 L8.6 3.268 V9.8 Q8.6 10.8 7.6 10.8 H1 Q0 10.8 0 9.8 V1 Q0 0 1 0Z"/><path fill="#fff" d="M4.732 0.6 V3.868 H8.0Z" opacity="0"/><path d="M5.3 1.2 L7.4 3.3 L5.3 3.3Z" fill="#fff" opacity="0.9"/><text x="4.3" y="9.2" text-anchor="middle" font-family="Liberation Sans" font-size="6.2" font-weight="700" fill="#fff">x</text></svg>
<div class="a" style="left:558.60px;top:130.70px;font-size:7.8px;line-height:7.8px;color:#555;">Export data to XLS...</div>
<svg class="a" style="left:538.8px;top:155.4px" width="8.6" height="10.8" viewBox="0 0 8.6 10.8"><path fill="#6e6e6e" d="M1 0 H5.332 L8.6 3.268 V9.8 Q8.6 10.8 7.6 10.8 H1 Q0 10.8 0 9.8 V1 Q0 0 1 0Z"/><path fill="#fff" d="M4.732 0.6 V3.868 H8.0Z" opacity="0"/><path d="M5.3 1.2 L7.4 3.3 L5.3 3.3Z" fill="#fff" opacity="0.9"/><text x="4.3" y="9.2" text-anchor="middle" font-family="Liberation Sans" font-size="6.2" font-weight="700" fill="#fff">x</text></svg>
<div class="a" style="left:558.60px;top:156.50px;font-size:7.8px;line-height:7.8px;color:#555;">Export data to XLSX...</div>
<div class="a" style="left:528.9px;top:93.1px;width:120.6px;height:86.7px;border:3px solid #f20000;"></div>
<svg class="a" style="left:624px;top:71.5px" width="26" height="21" viewBox="0 0 26 21"><ellipse cx="12.9" cy="10.55" rx="10.7" ry="8.5" fill="none" stroke="#f20000" stroke-width="2"/></svg>
<div class="card" style="left:672px;top:67px;width:349.3px;height:243px;"></div>
<svg class="a" style="left:682.8px;top:74.5px;" width="13.2" height="13.2" viewBox="0 0 24 24"><path fill="#1a1a1a" d="M7.58 4.08L6.15 2.65C3.75 4.48 2.17 7.3 2.03 10.5h2c.15-2.65 1.51-4.97 3.55-6.42zm12.39 6.42h2c-.15-3.2-1.73-6.02-4.12-7.85l-1.42 1.43c2.02 1.45 3.39 3.77 3.54 6.42zM18 11c0-3.07-1.64-5.64-4.5-6.32V4c0-.83-.67-1.5-1.5-1.5s-1.5.67-1.5 1.5v.68C7.63 5.36 6 7.92 6 11v5l-2 2v1h16v-1l-2-2v-5zm-6 11c.14 0 .27-.01.4-.04.65-.14 1.18-.58 1.44-1.18.1-.24.15-.5.15-.78h-4c.01 1.1.9 2 2.01 2z"/></svg>
<div class="a" style="left:697.70px;top:76.65px;font-size:8.8px;line-height:8.8px;color:#505050;letter-spacing:0.05px;">Alarms</div>
<svg class="a" style="left:953.6px;top:75.7px;" width="11" height="11" viewBox="0 0 24 24"><path fill="#333" d="M15.5 14h-.79l-.28-.27C15.41 12.59 16 11.11 16 9.5 16 5.91 13.09 3 9.5 3S3 5.91 3 9.5 5.91 16 9.5 16c1.61 0 3.09-.59 4.23-1.57l.27.28v.79l5 4.99L20.49 19l-4.99-5zm-6 0C7.01 14 5 11.99 5 9.5S7.01 5 9.5 5 14 7.01 14 9.5 11.99 14 9.5 14z"/></svg>
<svg class="a" style="left:969.8px;top:73.5px;" width="12.5" height="12.5" viewBox="0 0 24 24"><path fill="#333" d="M10 18h4v-2h-4v2zM3 6v2h18V6H3zm3 7h12v-2H6v2z"/></svg>
<svg class="a" style="left:989.8px;top:76.3px" width="7.4" height="8.8" viewBox="0 0 7.4 8.8"><path fill="#111" d="M1 0 H4.588 L7.4 2.8120000000000003 V7.800000000000001 Q7.4 8.8 6.4 8.8 H1 Q0 8.8 0 7.800000000000001 V1 Q0 0 1 0Z"/><path fill="#fff" d="M3.988 0.6 V3.4120000000000004 H6.800000000000001Z" opacity="0"/><circle cx="4.884" cy="2.3760000000000003" r="0.9620000000000001" fill="#fff"/><path d="M2.0720000000000005 7.040000000000001 L4.292 4.5760000000000005" stroke="#fff" stroke-width="1.2580000000000002" stroke-linecap="round"/><path fill="#fff" d="M2.9600000000000004 3.9600000000000004 L5.328 3.5200000000000005 L4.884 6.16Z"/></svg>
<svg class="a" style="left:1004.7px;top:75.6px;" width="12" height="12" viewBox="0 0 24 24"><path fill="#222" d="M7 14H5v5h5v-2H7v-3zm-2-4h2V7h3V5H5v5zm12 7h-3v2h5v-5h-2v3zM14 5v2h3v3h2V5h-5z"/></svg>
<div class="a" style="left:680.6px;top:102px;width:9px;height:9px;border:1.3px solid #6f6f6f;border-radius:1px"></div>
<div class="a" style="left:702.90px;top:103.10px;font-size:6.5px;line-height:6.5px;color:#8a8a8a;">Created time</div>
<svg class="a" style="left:742.3px;top:102.1px;" width="8.2" height="8.2" viewBox="0 0 24 24"><path fill="#777" d="M20 12l-1.41-1.41L13 16.17V4h-2v12.17l-5.58-5.59L4 12l8 8 8-8z"/></svg>
<div class="a" style="left:781.50px;top:103.10px;font-size:6.5px;line-height:6.5px;color:#8a8a8a;">Originator</div>
<div class="a" style="left:830.70px;top:103.10px;font-size:6.5px;line-height:6.5px;color:#8a8a8a;">Type</div>
<div class="a" style="left:881.30px;top:103.10px;font-size:6.5px;line-height:6.5px;color:#8a8a8a;">Severity</div>
<div class="a" style="left:924.50px;top:103.10px;font-size:6.5px;line-height:6.5px;color:#8a8a8a;">Status</div>
<div class="a" style="left:675px;top:121.8px;width:344.2px;height:0.8px;background:#e2e2e2"></div>
<div class="a" style="left:680.6px;top:131.9px;width:9px;height:9px;border:1.3px solid #6f6f6f;border-radius:1px"></div>
<div class="a" style="left:702.90px;top:133.76px;font-size:6.9px;line-height:6.9px;color:#454545;">2021-07-07 08:58:32</div>
<div class="a" style="left:781.50px;top:133.76px;font-size:6.9px;line-height:6.9px;color:#454545;">12345678</div>
<div class="a" style="left:830.70px;top:129.76px;font-size:6.9px;line-height:6.9px;color:#454545;">Low</div>
<div class="a" style="left:830.70px;top:137.76px;font-size:6.9px;line-height:6.9px;color:#454545;">Temperature</div>
<div class="a" style="left:881.30px;top:133.70px;font-size:6.85px;line-height:6.85px;color:#f2161e;font-weight:700;">Critical</div>
<div class="a" style="left:924.50px;top:129.76px;font-size:6.9px;line-height:6.9px;color:#454545;">Active</div>
<div class="a" style="left:924.50px;top:137.76px;font-size:6.9px;line-height:6.9px;color:#454545;">Unacknowledged</div>
<svg class="a" style="left:995.6px;top:129.2px;" width="12.6" height="12.6" viewBox="0 0 24 24"><path fill="#666" d="M9 16.17L4.83 12l-1.42 1.41L9 19 21 7l-1.41-1.41z"/></svg>
<div class="a" style="left:675px;top:150.20000000000002px;width:344.2px;height:0.8px;background:#ebebeb"></div>
<div class="a" style="left:680.6px;top:159.9px;width:9px;height:9px;border:1.3px solid #6f6f6f;border-radius:1px"></div>
<div class="a" style="left:702.90px;top:161.76px;font-size:6.9px;line-height:6.9px;color:#454545;">2021-06-21 02:31:12</div>
<div class="a" style="left:781.50px;top:161.76px;font-size:6.9px;line-height:6.9px;color:#454545;">12345678</div>
<div class="a" style="left:830.70px;top:161.76px;font-size:6.9px;line-height:6.9px;color:#454545;">Low Humidity</div>
<div class="a" style="left:881.30px;top:161.70px;font-size:6.85px;line-height:6.85px;color:#f2161e;font-weight:700;">Critical</div>
<div class="a" style="left:924.50px;top:157.76px;font-size:6.9px;line-height:6.9px;color:#454545;">Active</div>
<div class="a" style="left:924.50px;top:165.76px;font-size:6.9px;line-height:6.9px;color:#454545;">Unacknowledged</div>
<svg class="a" style="left:995.6px;top:157.2px;" width="12.6" height="12.6" viewBox="0 0 24 24"><path fill="#666" d="M9 16.17L4.83 12l-1.42 1.41L9 19 21 7l-1.41-1.41z"/></svg>
<div class="a" style="left:675px;top:178.20000000000002px;width:344.2px;height:0.8px;background:#ebebeb"></div>
<div class="a" style="left:675px;top:276.4px;width:344.2px;height:0.8px;background:#ebebeb"></div>
<div class="a" style="left:785.20px;top:290.27px;font-size:6.3px;line-height:6.3px;color:#8a8a8a;">Items per page:</div>
<div class="a" style="left:835.00px;top:290.27px;font-size:6.3px;line-height:6.3px;color:#8a8a8a;">10</div>
<div class="a" style="left:835px;top:298.6px;width:29px;height:0.9px;background:#c8c8c8"></div>
<svg class="a" style="left:853.2px;top:285.4px;" width="13" height="13" viewBox="0 0 24 24"><path fill="#555" d="M7 10l5 5 5-5z"/></svg>
<div class="a" style="left:884.00px;top:290.27px;font-size:6.3px;line-height:6.3px;color:#8a8a8a;">1 – 2 of 2</div>
<svg class="a" style="left:932.3px;top:285.35px;" width="14.5" height="14.5" viewBox="0 0 24 24"><path fill="#bdbdbd" d="M18.41 16.59L13.82 12l4.59-4.59L17 6l-6 6 6 6zM6 6h2v12H6z"/></svg>
<svg class="a" style="left:953.2px;top:285.35px;" width="14.5" height="14.5" viewBox="0 0 24 24"><path fill="#bdbdbd" d="M15.41 7.41L14 6l-6 6 6 6 1.41-1.41L10.83 12z"/></svg>
<svg class="a" style="left:974.0px;top:285.35px;" width="14.5" height="14.5" viewBox="0 0 24 24"><path fill="#bdbdbd" d="M10 6L8.59 7.41 13.17 12l-4.58 4.59L10 18l6-6z"/></svg>
<svg class="a" style="left:997.0px;top:285.35px;" width="14.5" height="14.5" viewBox="0 0 24 24"><path fill="#bdbdbd" d="M5.59 7.41L10.18 12l-4.59 4.59L7 18l6-6-6-6zM16 6h2v12h-2z"/></svg>
<div class="card" style="left:388.6px;top:315px;width:313.6px;height:207px;"></div>
<svg class="a" style="left:395.45px;top:320.3px;" width="12.8" height="12.8" viewBox="0 0 24 24"><path fill="#222" d="M3.5 18.49l6-6.01 4 4L22 6.92l-1.41-1.41-7.09 7.97-4-4L2 16.99z"/></svg>
<div class="a" style="left:410.80px;top:324.79px;font-size:8.75px;line-height:8.75px;color:#505050;letter-spacing:0.05px;">Temperature</div>
<svg class="a" style="left:668.3px;top:326.6px" width="7.4" height="8.8" viewBox="0 0 7.4 8.8"><path fill="#111" d="M1 0 H4.588 L7.4 2.8120000000000003 V7.800000000000001 Q7.4 8.8 6.4 8.8 H1 Q0 8.8 0 7.800000000000001 V1 Q0 0 1 0Z"/><path fill="#fff" d="M3.988 0.6 V3.4120000000000004 H6.800000000000001Z" opacity="0"/><circle cx="4.884" cy="2.3760000000000003" r="0.9620000000000001" fill="#fff"/><path d="M2.0720000000000005 7.040000000000001 L4.292 4.5760000000000005" stroke="#fff" stroke-width="1.2580000000000002" stroke-linecap="round"/><path fill="#fff" d="M2.9600000000000004 3.9600000000000004 L5.328 3.5200000000000005 L4.884 6.16Z"/></svg>
<svg class="a" style="left:683.2px;top:324.7px;" width="12" height="12" viewBox="0 0 24 24"><path fill="#222" d="M7 14H5v5h5v-2H7v-3zm-2-4h2V7h3V5H5v5zm12 7h-3v2h5v-5h-2v3zM14 5v2h3v3h2V5h-5z"/></svg>
<svg class="a" style="left:374.6px;top:344.3px" width="319.0" height="149.39999999999998" viewBox="374.6 344.3 319.0 149.39999999999998"><line x1="414.6" y1="376.18" x2="688.6" y2="376.18" stroke="#e3e3e3" stroke-width="0.8"/><line x1="414.6" y1="403.06" x2="688.6" y2="403.06" stroke="#e3e3e3" stroke-width="0.8"/><line x1="414.6" y1="429.94" x2="688.6" y2="429.94" stroke="#e3e3e3" stroke-width="0.8"/><line x1="414.6" y1="456.82" x2="688.6" y2="456.82" stroke="#e3e3e3" stroke-width="0.8"/><line x1="435.3" y1="349.3" x2="435.3" y2="483.7" stroke="#e3e3e3" stroke-width="0.8"/><line x1="474.4" y1="349.3" x2="474.4" y2="483.7" stroke="#e3e3e3" stroke-width="0.8"/><line x1="513.5" y1="349.3" x2="513.5" y2="483.7" stroke="#e3e3e3" stroke-width="0.8"/><line x1="552.6" y1="349.3" x2="552.6" y2="483.7" stroke="#e3e3e3" stroke-width="0.8"/><line x1="591.7" y1="349.3" x2="591.7" y2="483.7" stroke="#e3e3e3" stroke-width="0.8"/><line x1="630.8" y1="349.3" x2="630.8" y2="483.7" stroke="#e3e3e3" stroke-width="0.8"/><line x1="669.9" y1="349.3" x2="669.9" y2="483.7" stroke="#e3e3e3" stroke-width="0.8"/><rect x="414.6" y="349.3" width="274.0" height="134.39999999999998" fill="none" stroke="#9a9a9a" stroke-width="0.9"/><polyline points="416.00,381.01 419.12,389.42 420.80,383.42 422.48,387.02 424.41,382.21 426.33,391.82 428.01,390.62 429.69,382.21 431.61,384.62 433.29,381.01 435.21,382.21 437.13,390.62 439.29,381.01 442.41,376.69 444.81,381.01 447.21,371.41 450.34,361.81 452.74,364.21 454.42,371.41 456.82,384.62 459.94,381.01 461.62,375.01 464.02,377.41 466.42,375.49 470.02,381.01 473.63,388.22 477.23,402.62 482.03,421.83 485.63,441.04 488.03,437.44 489.95,437.44 492.83,435.04 496.43,417.03 498.84,406.22 501.24,413.43 503.64,417.03 506.04,405.02 508.44,394.22 510.36,396.62 513.24,390.62 515.64,405.02 519.24,417.03 522.85,420.63 525.25,429.03 527.65,426.63 528.85,432.64 530.05,427.83 531.25,433.84 533.65,429.03 536.05,437.44 539.65,431.43 542.53,450.64 545.65,450.64 548.06,459.05 551.66,441.04 551.00,445.84 553.40,436.24 556.52,427.83 560.61,411.03 564.21,413.43 566.61,409.83 569.01,411.03 570.69,408.63 572.61,417.03 574.29,413.43 578.61,432.64 580.53,433.36 582.21,442.24 585.34,433.84 588.22,429.03 590.62,427.83 591.82,424.23 594.94,439.84 598.30,427.83 601.42,416.55 606.22,442.24 609.83,426.63 613.43,409.83 615.83,406.22 617.51,402.14 619.43,411.03 622.31,400.70 625.43,412.23 629.03,427.83 632.64,411.03 634.32,406.22 637.44,409.83 639.12,414.63 643.44,394.22 646.32,395.42 650.16,379.81 653.04,384.62 655.44,387.02 659.77,397.82 663.13,388.70 665.05,394.22 668.65,389.42 669.85,383.42 671.53,387.02 672.97,382.21 674.65,389.42 676.57,385.82 678.25,391.82 679.93,388.22 683.06,396.62 686.18,403.82 689.06,402.62" fill="none" stroke="#3a92e0" stroke-width="1.5" stroke-linejoin="round" stroke-linecap="round"/></svg>
<div class="a" style="right:623.90px;top:346.70px;font-size:5.2px;line-height:5.2px;color:#555;">10.0 °C</div>
<div class="a" style="right:623.90px;top:373.58px;font-size:5.2px;line-height:5.2px;color:#555;">5.0 °C</div>
<div class="a" style="right:623.90px;top:400.46px;font-size:5.2px;line-height:5.2px;color:#555;">0.0 °C</div>
<div class="a" style="right:623.90px;top:427.34px;font-size:5.2px;line-height:5.2px;color:#555;">-5.0 °C</div>
<div class="a" style="right:623.90px;top:454.22px;font-size:5.2px;line-height:5.2px;color:#555;">-10.0 °C</div>
<div class="a" style="right:623.90px;top:481.10px;font-size:5.2px;line-height:5.2px;color:#555;">-15.0 °C</div>
<div class="a" style="left:435.30px;top:486.80px;font-size:5.2px;line-height:5.2px;color:#555;transform:translateX(-50%);">Jul 01</div>
<div class="a" style="left:474.40px;top:486.80px;font-size:5.2px;line-height:5.2px;color:#555;transform:translateX(-50%);">Jul 02</div>
<div class="a" style="left:513.50px;top:486.80px;font-size:5.2px;line-height:5.2px;color:#555;transform:translateX(-50%);">Jul 03</div>
<div class="a" style="left:552.60px;top:486.80px;font-size:5.2px;line-height:5.2px;color:#555;transform:translateX(-50%);">Jul 04</div>
<div class="a" style="left:591.70px;top:486.80px;font-size:5.2px;line-height:5.2px;color:#555;transform:translateX(-50%);">Jul 05</div>
<div class="a" style="left:630.80px;top:486.80px;font-size:5.2px;line-height:5.2px;color:#555;transform:translateX(-50%);">Jul 06</div>
<div class="a" style="left:669.90px;top:486.80px;font-size:5.2px;line-height:5.2px;color:#555;transform:translateX(-50%);">Jul 07</div>
<div class="a" style="left:394.2px;top:511.3px;width:8.5px;height:1.7px;background:#3a92e0"></div>
<div class="a" style="left:409.70px;top:508.88px;font-size:6.4px;line-height:6.4px;color:#555;">Temperature</div>
<div class="a" style="right:344.80px;top:498.64px;font-size:6.1px;line-height:6.1px;color:#f4511e;font-weight:700;">avg</div>
<div class="a" style="right:344.80px;top:508.91px;font-size:6.6px;line-height:6.6px;color:#555;">-0.93 °C</div>
<div class="card" style="left:708px;top:315px;width:313.5px;height:207.5px;"></div>
<svg class="a" style="left:714.65px;top:320.3px;" width="12.8" height="12.8" viewBox="0 0 24 24"><path fill="#222" d="M3.5 18.49l6-6.01 4 4L22 6.92l-1.41-1.41-7.09 7.97-4-4L2 16.99z"/></svg>
<div class="a" style="left:730.20px;top:324.79px;font-size:8.75px;line-height:8.75px;color:#505050;letter-spacing:0.05px;">Humidity</div>
<svg class="a" style="left:987.7px;top:326.6px" width="7.4" height="8.8" viewBox="0 0 7.4 8.8"><path fill="#111" d="M1 0 H4.588 L7.4 2.8120000000000003 V7.800000000000001 Q7.4 8.8 6.4 8.8 H1 Q0 8.8 0 7.800000000000001 V1 Q0 0 1 0Z"/><path fill="#fff" d="M3.988 0.6 V3.4120000000000004 H6.800000000000001Z" opacity="0"/><circle cx="4.884" cy="2.3760000000000003" r="0.9620000000000001" fill="#fff"/><path d="M2.0720000000000005 7.040000000000001 L4.292 4.5760000000000005" stroke="#fff" stroke-width="1.2580000000000002" stroke-linecap="round"/><path fill="#fff" d="M2.9600000000000004 3.9600000000000004 L5.328 3.5200000000000005 L4.884 6.16Z"/></svg>
<svg class="a" style="left:1002.6px;top:324.7px;" width="12" height="12" viewBox="0 0 24 24"><path fill="#222" d="M7 14H5v5h5v-2H7v-3zm-2-4h2V7h3V5H5v5zm12 7h-3v2h5v-5h-2v3zM14 5v2h3v3h2V5h-5z"/></svg>
<svg class="a" style="left:694.5px;top:344.3px" width="318.1" height="149.39999999999998" viewBox="694.5 344.3 318.1 149.39999999999998"><line x1="734.5" y1="376.18" x2="1007.6" y2="376.18" stroke="#e3e3e3" stroke-width="0.8"/><line x1="734.5" y1="403.06" x2="1007.6" y2="403.06" stroke="#e3e3e3" stroke-width="0.8"/><line x1="734.5" y1="429.94" x2="1007.6" y2="429.94" stroke="#e3e3e3" stroke-width="0.8"/><line x1="734.5" y1="456.82" x2="1007.6" y2="456.82" stroke="#e3e3e3" stroke-width="0.8"/><line x1="755.2" y1="349.3" x2="755.2" y2="483.7" stroke="#e3e3e3" stroke-width="0.8"/><line x1="794.3" y1="349.3" x2="794.3" y2="483.7" stroke="#e3e3e3" stroke-width="0.8"/><line x1="833.2" y1="349.3" x2="833.2" y2="483.7" stroke="#e3e3e3" stroke-width="0.8"/><line x1="872.1" y1="349.3" x2="872.1" y2="483.7" stroke="#e3e3e3" stroke-width="0.8"/><line x1="911.1" y1="349.3" x2="911.1" y2="483.7" stroke="#e3e3e3" stroke-width="0.8"/><line x1="950.1" y1="349.3" x2="950.1" y2="483.7" stroke="#e3e3e3" stroke-width="0.8"/><line x1="989.2" y1="349.3" x2="989.2" y2="483.7" stroke="#e3e3e3" stroke-width="0.8"/><rect x="734.5" y="349.3" width="273.1" height="134.39999999999998" fill="none" stroke="#9a9a9a" stroke-width="0.9"/><polyline points="735.40,480.30 738.49,477.21 741.58,474.12 743.59,475.97 744.67,474.12 746.68,474.89 748.53,472.58 751.62,475.97 754.40,474.89 757.79,479.06 760.11,477.98 763.20,476.44 766.29,477.98 769.38,475.20 772.00,476.44 774.78,473.81 777.10,475.36 781.73,470.26 787.44,464.08 791.77,468.72 795.63,472.88 800.26,474.89 804.12,478.75 808.44,483.08 811.07,479.52 814.16,476.44 816.47,477.52 818.33,475.66 822.65,479.99 825.74,476.44 829.60,479.06 831.14,476.74 833.77,477.98 834.69,476.90 837.78,481.07 840.87,477.52 842.72,478.75 845.81,477.21 849.67,472.88 853.53,471.80 856.62,471.03 860.95,471.80 864.03,474.89 867.43,470.26 865.00,474.12 868.09,470.26 871.95,466.71 875.04,468.72 877.35,471.03 879.67,469.18 881.68,470.72 886.62,464.55 890.48,463.31 892.79,464.08 896.66,462.08 898.20,464.08 901.29,460.22 904.38,460.53 909.01,465.63 911.32,464.55 914.10,464.85 919.05,468.72 920.90,468.25 925.99,463.31 928.62,463.31 931.09,462.08 936.03,465.16 941.90,458.99 944.52,460.99 949.16,462.54 952.25,464.08 954.56,461.77 959.50,459.45 961.51,461.77 964.60,458.37 966.14,459.45 968.15,457.91 974.64,463.31 977.72,460.99 981.58,459.45 986.99,465.63 993.17,468.72 995.48,466.71 999.34,467.94 1002.43,464.55 1006.75,461.77" fill="none" stroke="#3ee03e" stroke-width="1.5" stroke-linejoin="round" stroke-linecap="round"/></svg>
<div class="a" style="right:304.00px;top:346.70px;font-size:5.2px;line-height:5.2px;color:#555;">100.0 %</div>
<div class="a" style="right:304.00px;top:373.58px;font-size:5.2px;line-height:5.2px;color:#555;">80.0 %</div>
<div class="a" style="right:304.00px;top:400.46px;font-size:5.2px;line-height:5.2px;color:#555;">60.0 %</div>
<div class="a" style="right:304.00px;top:427.34px;font-size:5.2px;line-height:5.2px;color:#555;">40.0 %</div>
<div class="a" style="right:304.00px;top:454.22px;font-size:5.2px;line-height:5.2px;color:#555;">20.0 %</div>
<div class="a" style="right:304.00px;top:481.10px;font-size:5.2px;line-height:5.2px;color:#555;">0.0 %</div>
<div class="a" style="left:755.20px;top:486.80px;font-size:5.2px;line-height:5.2px;color:#555;transform:translateX(-50%);">Jul 01</div>
<div class="a" style="left:794.30px;top:486.80px;font-size:5.2px;line-height:5.2px;color:#555;transform:translateX(-50%);">Jul 02</div>
<div class="a" style="left:833.20px;top:486.80px;font-size:5.2px;line-height:5.2px;color:#555;transform:translateX(-50%);">Jul 03</div>
<div class="a" style="left:872.10px;top:486.80px;font-size:5.2px;line-height:5.2px;color:#555;transform:translateX(-50%);">Jul 04</div>
<div class="a" style="left:911.10px;top:486.80px;font-size:5.2px;line-height:5.2px;color:#555;transform:translateX(-50%);">Jul 05</div>
<div class="a" style="left:950.10px;top:486.80px;font-size:5.2px;line-height:5.2px;color:#555;transform:translateX(-50%);">Jul 06</div>
<div class="a" style="left:989.20px;top:486.80px;font-size:5.2px;line-height:5.2px;color:#555;transform:translateX(-50%);">Jul 07</div>
<div class="a" style="left:714px;top:511.3px;width:8.5px;height:1.7px;background:#3ee03e"></div>
<div class="a" style="left:728.80px;top:508.88px;font-size:6.4px;line-height:6.4px;color:#555;">Humidity</div>
<div class="a" style="right:25.00px;top:498.64px;font-size:6.1px;line-height:6.1px;color:#f4511e;font-weight:700;">avg</div>
<div class="a" style="right:25.00px;top:508.91px;font-size:6.6px;line-height:6.6px;color:#555;">10.28 %</div>
<div class="card" style="left:140px;top:528px;width:207.5px;height:62px;"></div>
<div class="a" style="left:147.70px;top:536.84px;font-size:8.7px;line-height:8.7px;color:#4a4a4a;">High Temperature Threshold</div>
<div class="a" style="left:149.10px;top:551.47px;font-size:6.3px;line-height:6.3px;color:#9a9a9a;">Value *</div>
<div class="a" style="left:149.10px;top:562.49px;font-size:8.4px;line-height:8.4px;color:#333;">30</div>
<div class="a" style="left:149.1px;top:574.5px;width:151.8px;height:1px;background:#b9b9b9"></div>
<svg class="a" style="left:307.3px;top:565px;" width="10.2" height="10.2" viewBox="0 0 24 24"><path fill="#c4c4c4" d="M9 16.17L4.83 12l-1.42 1.41L9 19 21 7l-1.41-1.41z"/></svg>
<svg class="a" style="left:325.2px;top:565.4px;" width="9.4" height="9.4" viewBox="0 0 24 24"><path fill="#b0b0b0" d="M19 6.41L17.59 5 12 10.59 6.41 5 5 6.41 10.59 12 5 17.59 6.41 19 12 13.41 17.59 19 19 17.59 13.41 12z"/></svg>
<div class="card" style="left:353.2px;top:528px;width:207px;height:62px;"></div>
<div class="a" style="left:360.90px;top:536.84px;font-size:8.7px;line-height:8.7px;color:#4a4a4a;">Low Temperature Threshold</div>
<div class="a" style="left:362.30px;top:551.47px;font-size:6.3px;line-height:6.3px;color:#9a9a9a;">Value *</div>
<div class="a" style="left:362.30px;top:562.49px;font-size:8.4px;line-height:8.4px;color:#333;">1</div>
<div class="a" style="left:362.3px;top:574.5px;width:151.3px;height:1px;background:#b9b9b9"></div>
<svg class="a" style="left:520.0px;top:565px;" width="10.2" height="10.2" viewBox="0 0 24 24"><path fill="#c4c4c4" d="M9 16.17L4.83 12l-1.42 1.41L9 19 21 7l-1.41-1.41z"/></svg>
<svg class="a" style="left:537.9000000000001px;top:565.4px;" width="9.4" height="9.4" viewBox="0 0 24 24"><path fill="#b0b0b0" d="M19 6.41L17.59 5 12 10.59 6.41 5 5 6.41 10.59 12 5 17.59 6.41 19 12 13.41 17.59 19 19 17.59 13.41 12z"/></svg>
<div class="card" style="left:565.8px;top:528px;width:207.4px;height:62px;"></div>
<div class="a" style="left:573.50px;top:536.84px;font-size:8.7px;line-height:8.7px;color:#4a4a4a;">High Humidity Threshold</div>
<div class="a" style="left:574.90px;top:551.47px;font-size:6.3px;line-height:6.3px;color:#9a9a9a;">Value *</div>
<div class="a" style="left:574.90px;top:562.49px;font-size:8.4px;line-height:8.4px;color:#333;">80</div>
<div class="a" style="left:574.9px;top:574.5px;width:151.7px;height:1px;background:#b9b9b9"></div>
<svg class="a" style="left:732.9999999999999px;top:565px;" width="10.2" height="10.2" viewBox="0 0 24 24"><path fill="#c4c4c4" d="M9 16.17L4.83 12l-1.42 1.41L9 19 21 7l-1.41-1.41z"/></svg>
<svg class="a" style="left:750.9px;top:565.4px;" width="9.4" height="9.4" viewBox="0 0 24 24"><path fill="#b0b0b0" d="M19 6.41L17.59 5 12 10.59 6.41 5 5 6.41 10.59 12 5 17.59 6.41 19 12 13.41 17.59 19 19 17.59 13.41 12z"/></svg>
<div class="card" style="left:778.8px;top:528px;width:242.6px;height:62px;"></div>
<div class="a" style="left:786.50px;top:536.84px;font-size:8.7px;line-height:8.7px;color:#4a4a4a;">Low Humidity Threshold</div>
<div class="a" style="left:787.90px;top:551.47px;font-size:6.3px;line-height:6.3px;color:#9a9a9a;">Value *</div>
<div class="a" style="left:787.90px;top:562.49px;font-size:8.4px;line-height:8.4px;color:#333;">20</div>
<div class="a" style="left:787.9px;top:574.5px;width:186.89999999999998px;height:1px;background:#b9b9b9"></div>
<svg class="a" style="left:981.1999999999999px;top:565px;" width="10.2" height="10.2" viewBox="0 0 24 24"><path fill="#c4c4c4" d="M9 16.17L4.83 12l-1.42 1.41L9 19 21 7l-1.41-1.41z"/></svg>
<svg class="a" style="left:999.1px;top:565.4px;" width="9.4" height="9.4" viewBox="0 0 24 24"><path fill="#b0b0b0" d="M19 6.41L17.59 5 12 10.59 6.41 5 5 6.41 10.59 12 5 17.59 6.41 19 12 13.41 17.59 19 19 17.59 13.41 12z"/></svg>
<div class="a" style="left:1027px;top:61px;width:9px;height:522px;background:#f1f1f1"></div>
<div class="a" style="left:1028px;top:71px;width:7px;height:492px;background:#c1c1c1"></div>
<svg class="a" style="left:1027px;top:61px" width="9" height="522" viewBox="0 0 9 522"><path d="M2.3 6.8 L4.5 4.2 L6.7 6.8Z" fill="#505050"/><path d="M2.3 514.6 L4.5 517.2 L6.7 514.6Z" fill="#505050"/></svg>
</body></html>
